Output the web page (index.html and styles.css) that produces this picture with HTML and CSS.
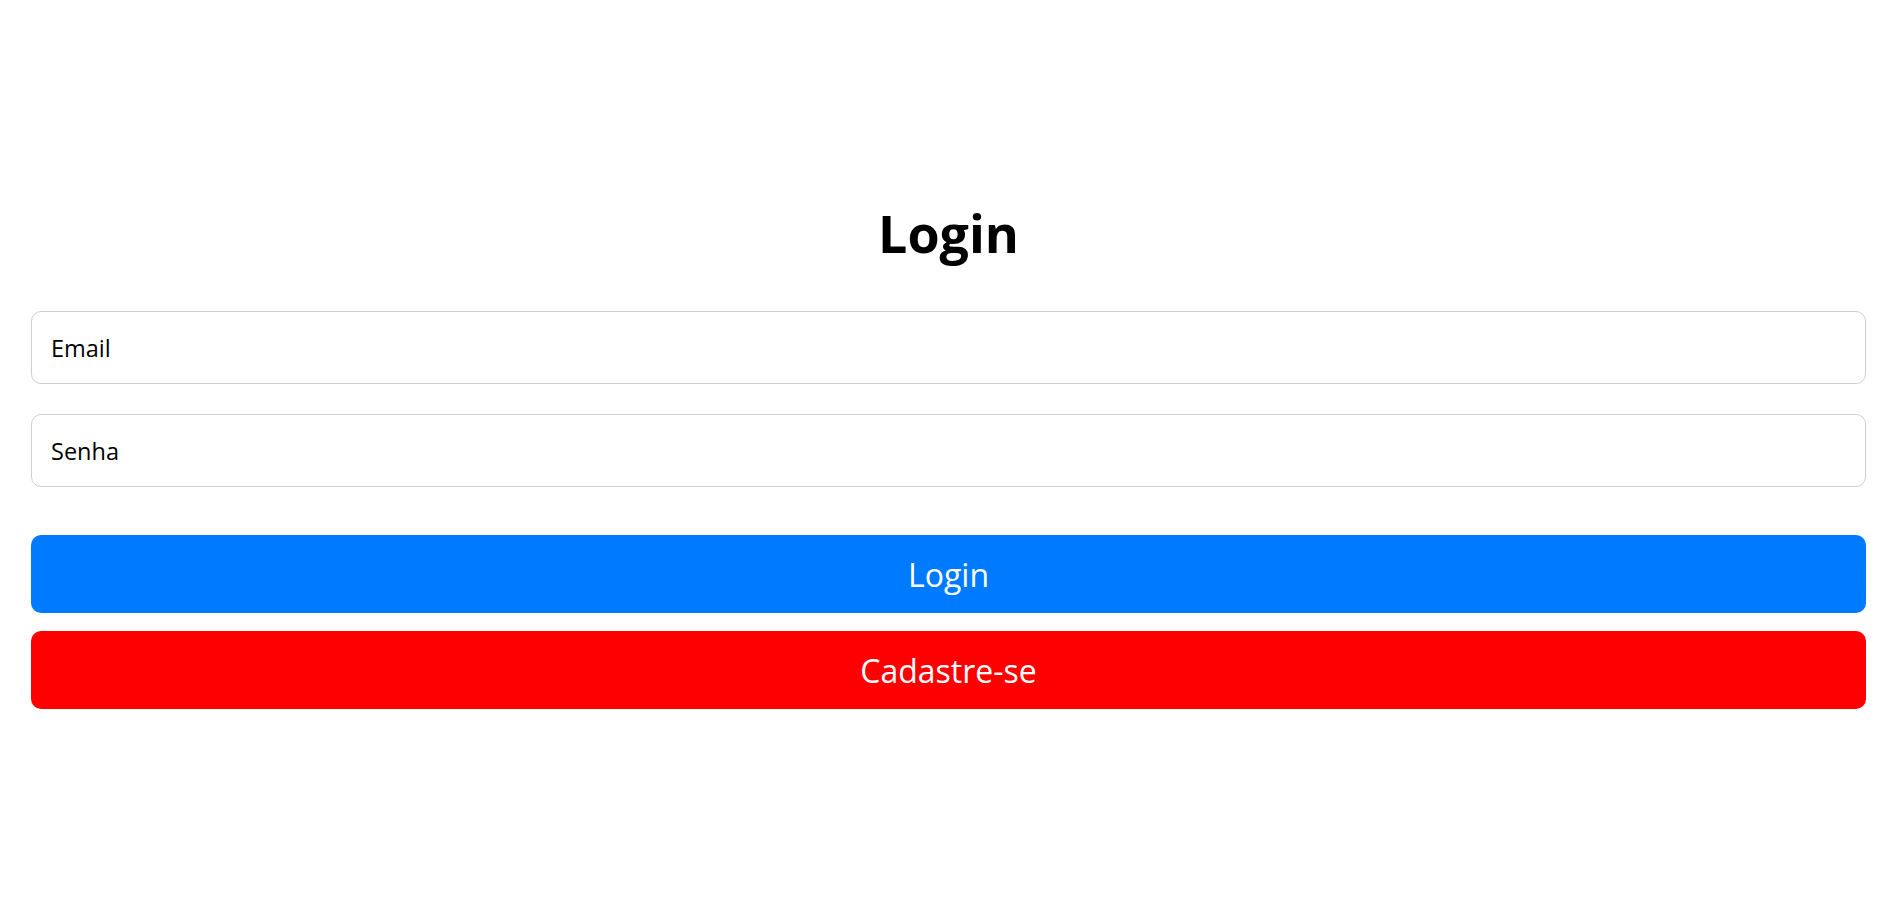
FILE: index.html
```html
<!DOCTYPE html>
<html lang="pt-BR">
<head>
<meta charset="utf-8">
<title>Login</title>
<link rel="stylesheet" href="styles.css">
</head>
<body>
<main class="page">
  <h1 class="title">Login</h1>
  <form class="form">
    <div class="fields">
      <input class="field" type="email" placeholder="Email">
      <input class="field" type="password" placeholder="Senha">
    </div>
    <div class="actions">
      <button class="btn btn-primary" type="button">Login</button>
      <button class="btn btn-danger" type="button">Cadastre-se</button>
    </div>
  </form>
</main>
</body>
</html>
```

FILE: styles.css
```css
html, body {
  margin: 0;
  padding: 0;
  background: #fff;
}

body {
  font-family: "Open Sans", "Noto Sans", "Liberation Sans", sans-serif;
  color: #000;
}

.page {
  padding: 203px 37px 0 31px;
}

.title {
  margin: 0;
  height: 60px;
  line-height: 60px;
  font-size: 52px;
  font-weight: 700;
  text-align: center;
}

.form {
  margin-top: 48px;
  display: flex;
  flex-direction: column;
  gap: 48px;
}

.fields {
  display: flex;
  flex-direction: column;
  gap: 30px;
}

.field {
  box-sizing: border-box;
  display: block;
  width: 100%;
  height: 73px;
  margin: 0;
  padding: 0 19px;
  border: 1px solid #cfcfcf;
  border-radius: 10px;
  font-family: inherit;
  font-size: 23.5px;
  color: #000;
  background: #fff;
  outline: none;
}

.field::placeholder {
  color: #000;
  opacity: 1;
}

.actions {
  display: flex;
  flex-direction: column;
  gap: 18px;
}

.btn {
  box-sizing: border-box;
  display: block;
  width: 100%;
  height: 78px;
  margin: 0;
  padding: 0;
  border: none;
  border-radius: 10px;
  font-family: inherit;
  font-size: 32px;
  color: #fff;
  cursor: pointer;
}

.btn-primary {
  background: #007bff;
}

.btn-danger {
  background: #ff0000;
}
```
